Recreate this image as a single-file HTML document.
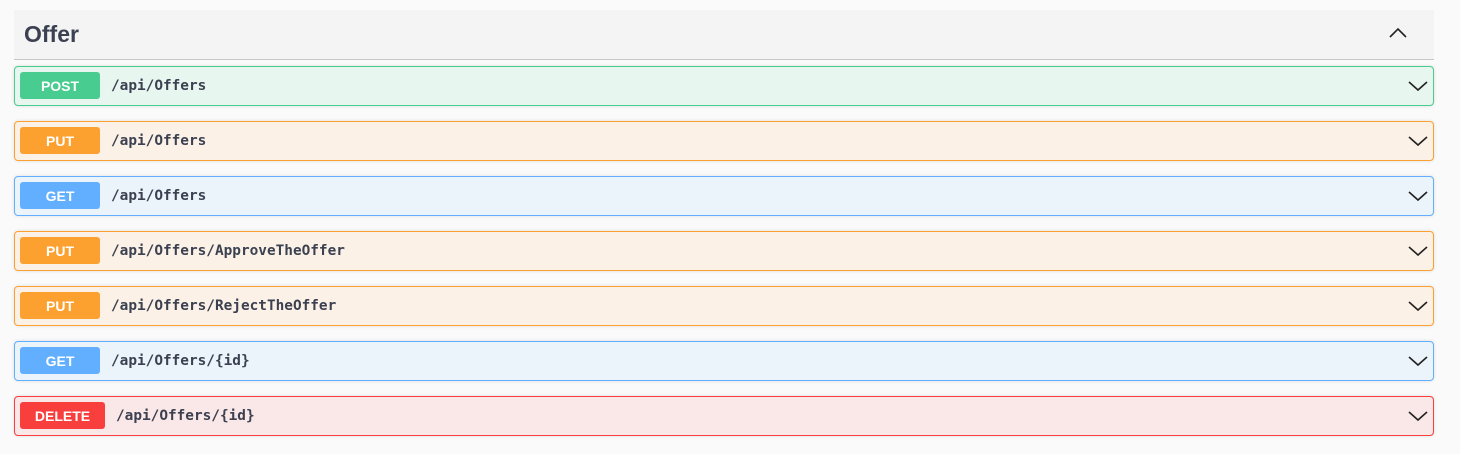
<!DOCTYPE html>
<html><head><style>
body{margin:0;background:#fafafa;width:1460px;height:454px;overflow:hidden;font-family:"Liberation Sans",sans-serif}
.tag{position:absolute;left:14px;top:10px;width:1420px;height:49px;background:#f4f4f4;border-bottom:1px solid #c8c8c8}
.tag h3{margin:0;position:absolute;left:10px;top:11px;font-size:23px;font-weight:bold;color:#3b4151}
.op{position:absolute;left:14px;width:1418px;height:38px;border:1px solid;border-radius:4px;box-shadow:0 0 3px rgba(0,0,0,.12)}
.b{position:absolute;left:5px;top:5px;width:80px;height:27px;border-radius:3px;color:#fff;font-weight:bold;font-size:14px;text-align:center;line-height:29px}
.p{position:absolute;left:96px;top:11px;font-family:"DejaVu Sans Mono",monospace;font-weight:bold;font-size:14.4px;color:#3b4151}
svg{position:absolute}
.post{border-color:#49cc90;background:#e8f6f0}.post .b{background:#49cc90}
.put{border-color:#fca130;background:#fcf1e6}.put .b{background:#fca130}
.get{border-color:#61affe;background:#ebf3fb}.get .b{background:#61affe}
.del{border-color:#f93e3e;background:#fae7e7}.del .b{background:#f93e3e;width:85px}
</style></head><body>
<div class="tag"><h3>Offer</h3>
<svg style="left:1375px;top:17px" width="18" height="12"><path d="M1 10 L9 2 L17 10" fill="none" stroke="#222" stroke-width="1.6"/></svg></div>
<div class="op post" style="top:66px"><div class="b">POST</div><div class="p">/api/Offers</div></div>
<div class="op put" style="top:121px"><div class="b">PUT</div><div class="p">/api/Offers</div></div>
<div class="op get" style="top:176px"><div class="b">GET</div><div class="p">/api/Offers</div></div>
<div class="op put" style="top:231px"><div class="b">PUT</div><div class="p">/api/Offers/ApproveTheOffer</div></div>
<div class="op put" style="top:286px"><div class="b">PUT</div><div class="p">/api/Offers/RejectTheOffer</div></div>
<div class="op get" style="top:341px"><div class="b">GET</div><div class="p">/api/Offers/{id}</div></div>
<div class="op del" style="top:396px"><div class="b">DELETE</div><div class="p" style="left:101px">/api/Offers/{id}</div></div>
<script>
document.querySelectorAll('.op').forEach(function(o){o.insertAdjacentHTML('beforeend','<svg style="left:1393px;top:13px" width="20" height="12"><path d="M1 2 L10 10 L19 2" fill="none" stroke="#222" stroke-width="1.6"/></svg>')});
</script>
</body></html>
